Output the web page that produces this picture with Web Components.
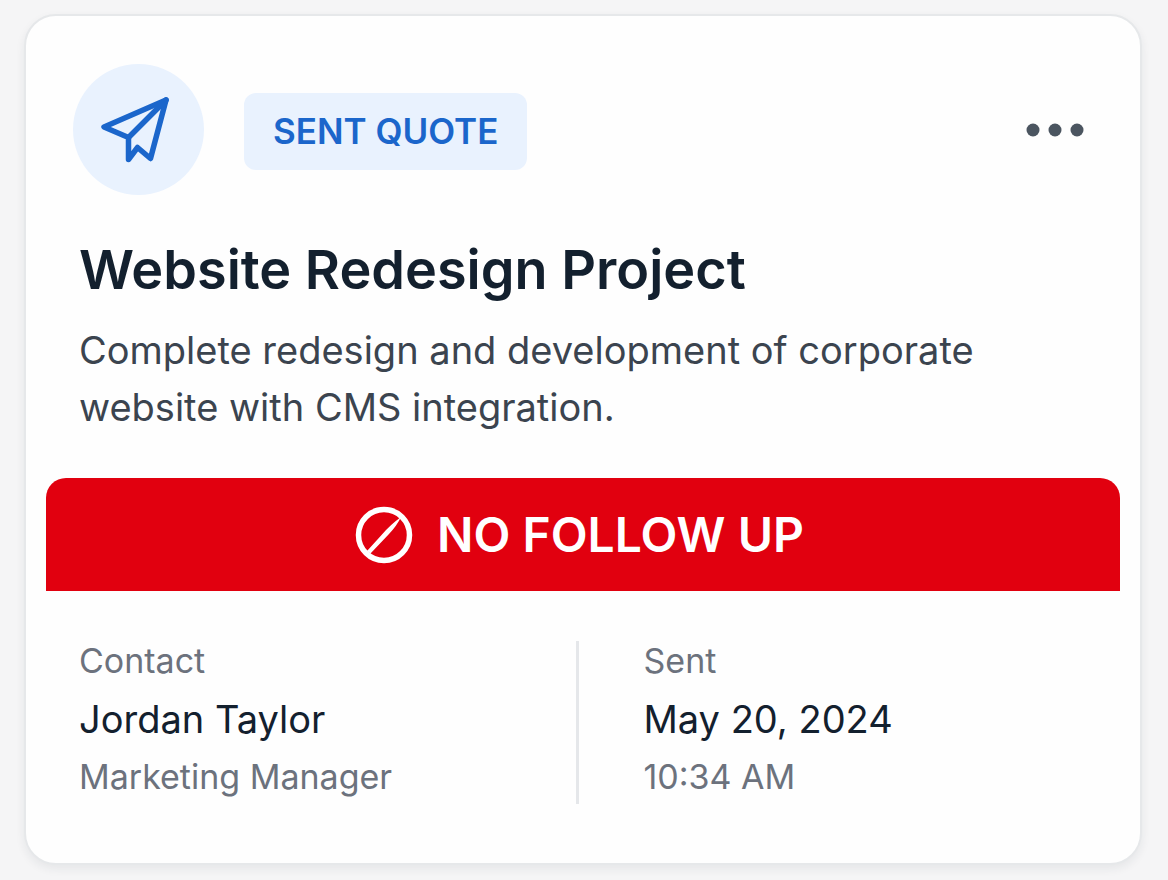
<!DOCTYPE html>
<html lang="en">
<head>
<meta charset="utf-8">
<meta name="viewport" content="width=device-width, initial-scale=1">
<title>Website Redesign Project</title>
<style>
  body {
    margin: 0;
    padding: 14px 26px 16px 24px;
    background: #f5f5f6;
    color: #13202e;
    font-family: Inter, "Liberation Sans", sans-serif;
  }
</style>
</head>
<body>
<quote-card>
  <card-header slot="header">Sent quote</card-header>
  <span slot="title">Website Redesign Project</span>
  <span slot="description">Complete redesign and development of corporate website with CMS integration.</span>
  <status-banner slot="banner">No follow up</status-banner>
  <detail-block slot="details" label="Contact" note="Marketing Manager">Jordan Taylor</detail-block>
  <detail-block slot="details" label="Sent" note="10:34 AM" divided>May 20, 2024</detail-block>
</quote-card>

<script>
const cardTemplate = document.createElement('template');
cardTemplate.innerHTML = `
  <style>
    :host {
      display: block;
      background: #fefefe;
      border: 2px solid #e6e8ea;
      border-radius: 32px;
      box-shadow: 0 4px 10px rgba(30,40,60,0.07);
    }
    .card__text {
      padding: 0 53px;
    }
    h1 {
      margin: 39px 0 0;
      font-size: 54px;
      font-weight: 600;
      line-height: 72px;
    }
    p {
      margin: 16px 0 0;
      color: #3b444f;
      font-size: 38px;
      line-height: 57px;
    }
    .card__banner {
      padding: 42px 20px 0;
    }
    .card__details {
      display: grid;
      grid-template-columns: 1fr 1fr;
      padding: 50px 68px 59px 53px;
    }
  </style>
  <slot name="header"></slot>
  <div class="card__text">
    <h1><slot name="title"></slot></h1>
    <p><slot name="description"></slot></p>
  </div>
  <div class="card__banner"><slot name="banner"></slot></div>
  <div class="card__details"><slot name="details"></slot></div>
`;

class QuoteCard extends HTMLElement {
  constructor() {
    super();
    this.attachShadow({ mode: 'open' });
    this.shadowRoot.appendChild(cardTemplate.content.cloneNode(true));
  }
}

const headerTemplate = document.createElement('template');
headerTemplate.innerHTML = `
  <style>
    :host {
      display: flex;
      align-items: center;
      padding: 48px 55px 0 47px;
    }
    .header__icon {
      display: flex;
      width: 131px;
      height: 131px;
      border-radius: 50%;
      background: #e9f2fe;
    }
    .header__badge {
      margin: 4px 0 0 40px;
      padding: 16px 29px;
      border-radius: 12px;
      background: #e9f2fe;
      color: #1b66cb;
      font-size: 35px;
      font-weight: 600;
      line-height: 45px;
      text-transform: uppercase;
    }
    button {
      display: flex;
      margin-left: auto;
      padding: 12px 0;
      border: 0;
      background: none;
      color: #4b5560;
      cursor: pointer;
    }
  </style>
  <div class="header__icon">
    <svg width="131" height="131" viewBox="0 0 131 131" fill="none" stroke="#1b66cb" stroke-width="5.500" stroke-linecap="round" stroke-linejoin="round" aria-hidden="true">
      <path d="M93 36 31 63 55.500 73.500V95.500L64.500 83.500 77.500 94.500Z"/>
      <path d="M93 36 55.500 73.500"/>
    </svg>
  </div>
  <div class="header__badge"><slot></slot></div>
  <button type="button" aria-label="More options">
    <svg width="60" height="14" viewBox="0 0 60 14" fill="currentColor" aria-hidden="true">
      <circle cx="8" cy="7" r="6.500"/>
      <circle cx="30" cy="7" r="6.500"/>
      <circle cx="52" cy="7" r="6.500"/>
    </svg>
  </button>
`;

class CardHeader extends HTMLElement {
  constructor() {
    super();
    this.attachShadow({ mode: 'open' });
    this.shadowRoot.appendChild(headerTemplate.content.cloneNode(true));
  }
}

const bannerTemplate = document.createElement('template');
bannerTemplate.innerHTML = `
  <style>
    :host {
      display: flex;
      align-items: center;
      justify-content: center;
      gap: 24px;
      padding: 27px 7px 26px 0;
      border-radius: 20px 20px 0 0;
      background: #e1000f;
      color: #fff;
      font-size: 48px;
      font-weight: 600;
      line-height: 60px;
      text-transform: uppercase;
    }
  </style>
  <svg width="58" height="58" viewBox="0 0 58 58" aria-hidden="true">
    <circle cx="29" cy="29" r="25.500" fill="none" stroke="#fff" stroke-width="5.500"/>
    <path fill="#fff" d="M12 45 27 28.500Q35 19 46 11 42 19.500 34 28L15.500 47.500Z"/>
  </svg>
  <span><slot></slot></span>
`;

class StatusBanner extends HTMLElement {
  constructor() {
    super();
    this.attachShadow({ mode: 'open' });
    this.shadowRoot.appendChild(bannerTemplate.content.cloneNode(true));
  }
}

const detailTemplate = document.createElement('template');
detailTemplate.innerHTML = `
  <style>
    :host {
      display: block;
      padding-bottom: 7px;
    }
    :host([divided]) {
      border-left: 3px solid #e5e7ea;
      padding-left: 65px;
    }
    div {
      color: #6c727d;
      font-size: 34px;
      line-height: 40px;
    }
    .detail__value {
      margin: 12px 0;
      color: #13202e;
      font-size: 38px;
      line-height: 52px;
    }
  </style>
  <div id="detail-label"></div>
  <div class="detail__value"><slot></slot></div>
  <div id="detail-note"></div>
`;

class DetailBlock extends HTMLElement {
  constructor() {
    super();
    this.attachShadow({ mode: 'open' });
    this.shadowRoot.appendChild(detailTemplate.content.cloneNode(true));
  }

  static get observedAttributes() {
    return ['label', 'note'];
  }

  attributeChangedCallback(name, oldValue, newValue) {
    this.shadowRoot.getElementById(`detail-${name}`).textContent = newValue;
  }
}

window.customElements.define('quote-card', QuoteCard);
window.customElements.define('card-header', CardHeader);
window.customElements.define('status-banner', StatusBanner);
window.customElements.define('detail-block', DetailBlock);
</script>
</body>
</html>
